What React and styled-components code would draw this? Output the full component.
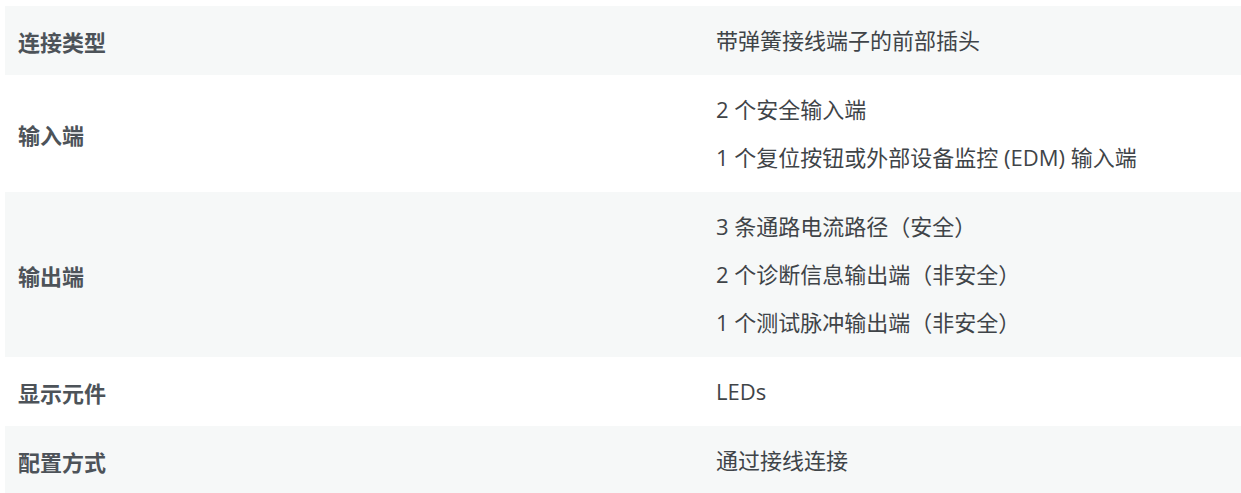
import React from "react";
import styled, { createGlobalStyle } from "styled-components";

const Global = createGlobalStyle`
  html, body { margin: 0; padding: 0; background: #ffffff; }
  body { font-family: "Open Sans", "Noto Sans CJK SC", sans-serif; }
`;

const Page = styled.div`
  padding: 6px 0 0 5px;
`;

const Table = styled.div`
  display: flex;
  flex-direction: column;
  width: 1236px;
`;

const Row = styled.div`
  display: grid;
  grid-template-columns: 698px 1fr;
  background: ${(p) => (p.$shade ? "#f6f8f8" : "#ffffff")};
`;

const LabelCell = styled.div`
  display: flex;
  align-items: center;
  padding: 0 13px;
  font-family: "Open Sans", "Noto Sans CJK SC", sans-serif;
  font-weight: 700;
  font-size: 22px;
  color: #4d5359;
`;

const ValueCell = styled.div`
  display: flex;
  flex-direction: column;
  gap: 15px;
  padding: 18px 13px;
  font-family: "Open Sans", "Noto Sans CJK SC", sans-serif;
  font-weight: 400;
  font-size: 22px;
  color: #3f4448;
`;

const Line = styled.div`
  line-height: 33px;
  white-space: nowrap;
`;

const rows = [
  { label: "连接类型", values: ["带弹簧接线端子的前部插头"] },
  { label: "输入端", values: ["2 个安全输入端", "1 个复位按钮或外部设备监控 (EDM) 输入端"] },
  {
    label: "输出端",
    values: ["3 条通路电流路径（安全）", "2 个诊断信息输出端（非安全）", "1 个测试脉冲输出端（非安全）"],
  },
  { label: "显示元件", values: ["LEDs"] },
  { label: "配置方式", values: ["通过接线连接"] },
];

export default function App() {
  return (
    <Page>
      <Global />
      <Table>
        {rows.map((r, i) => (
          <Row key={r.label} $shade={i % 2 === 0}>
            <LabelCell>{r.label}</LabelCell>
            <ValueCell>
              {r.values.map((v) => (
                <Line key={v}>{v}</Line>
              ))}
            </ValueCell>
          </Row>
        ))}
      </Table>
    </Page>
  );
}
